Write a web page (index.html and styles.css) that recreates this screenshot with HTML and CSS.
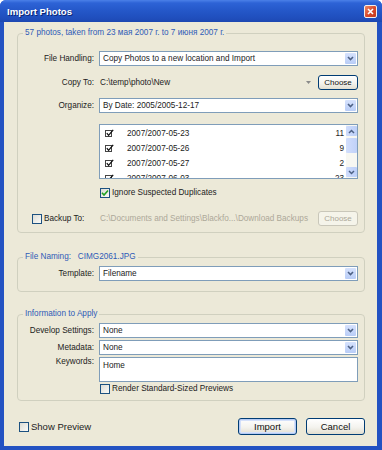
FILE: index.html
```html
<!DOCTYPE html>
<html>
<head>
	<meta charset="UTF-8">
	<title>Import Photos</title>
	<link rel="stylesheet" href="styles.css">
</head>
<body>
<div class="window">
	<div class="titlebar">
		<span class="title">Import Photos</span>
		<span class="close"><svg width="7" height="7" viewBox="0 0 7 7"><path d="M1 1l5 5M6 1l-5 5" stroke="#fff" stroke-width="1.6"/></svg></span>
	</div>

	<div class="client">
		<fieldset class="group g1">
			<legend>57 photos, taken from 23 мая 2007 г. to 7 июня 2007 г.</legend>

			<div class="row r-handling">
				<span class="lbl">File Handling:</span>
				<div class="combo"><span class="txt">Copy Photos to a new location and Import</span><span class="drop"><svg width="7" height="5" viewBox="0 0 7 5"><path d="M1 1l2.5 2.5L6 1" fill="none" stroke="#4d6185" stroke-width="1.6"/></svg></span></div>
			</div>

			<div class="row r-copy">
				<span class="lbl">Copy To:</span>
				<div class="path"><span class="txt">C:\temp\photo\New</span><svg width="5" height="3" viewBox="0 0 5 3"><path d="M0 0h5L2.5 3z" fill="#8a8a8a"/></svg></div>
				<button class="btn small">Choose</button>
			</div>

			<div class="row r-organize">
				<span class="lbl">Organize:</span>
				<div class="combo"><span class="txt">By Date: 2005/2005-12-17</span><span class="drop"><svg width="7" height="5" viewBox="0 0 7 5"><path d="M1 1l2.5 2.5L6 1" fill="none" stroke="#4d6185" stroke-width="1.6"/></svg></span></div>
			</div>

			<div class="list">
				<div class="items">
					<div class="item"><svg class="cb" width="9" height="9" viewBox="0 0 9 9"><rect x="0.5" y="1.5" width="6" height="6" fill="none" stroke="#444"/><path d="M1.8 4.2l1.8 2.1L8.2 0.8" fill="none" stroke="#111" stroke-width="1.3"/></svg><span class="date">2007/2007-05-23</span><span class="count">11</span></div>
					<div class="item"><svg class="cb" width="9" height="9" viewBox="0 0 9 9"><rect x="0.5" y="1.5" width="6" height="6" fill="none" stroke="#444"/><path d="M1.8 4.2l1.8 2.1L8.2 0.8" fill="none" stroke="#111" stroke-width="1.3"/></svg><span class="date">2007/2007-05-26</span><span class="count">9</span></div>
					<div class="item"><svg class="cb" width="9" height="9" viewBox="0 0 9 9"><rect x="0.5" y="1.5" width="6" height="6" fill="none" stroke="#444"/><path d="M1.8 4.2l1.8 2.1L8.2 0.8" fill="none" stroke="#111" stroke-width="1.3"/></svg><span class="date">2007/2007-05-27</span><span class="count">2</span></div>
					<div class="item"><svg class="cb" width="9" height="9" viewBox="0 0 9 9"><rect x="0.5" y="1.5" width="6" height="6" fill="none" stroke="#444"/><path d="M1.8 4.2l1.8 2.1L8.2 0.8" fill="none" stroke="#111" stroke-width="1.3"/></svg><span class="date">2007/2007-06-03</span><span class="count">23</span></div>
				</div>
				<div class="scroll">
					<span class="sbtn"><svg width="7" height="5" viewBox="0 0 7 5"><path d="M1 4l2.5-2.5L6 4" fill="none" stroke="#4d6185" stroke-width="1.5"/></svg></span>
					<span class="thumb"></span>
					<span class="track"></span>
					<span class="sbtn"><svg width="7" height="5" viewBox="0 0 7 5"><path d="M1 1l2.5 2.5L6 1" fill="none" stroke="#4d6185" stroke-width="1.5"/></svg></span>
				</div>
			</div>

			<div class="row r-ignore">
				<span class="xpcb"><svg width="8" height="8" viewBox="0 0 8 8"><path d="M1 3.8l2 2.2L7 1.5" fill="none" stroke="#21a121" stroke-width="1.6"/></svg></span>
				<span class="cbtext">Ignore Suspected Duplicates</span>
			</div>

			<div class="row r-backup">
				<div class="bk">
					<span class="xpcb"></span>
					<span class="cbtext">Backup To:</span>
				</div>
				<div class="path dim">C:\Documents and Settings\Blackfo...\Download Backups</div>
				<button class="btn small off">Choose</button>
			</div>
		</fieldset>

		<fieldset class="group g2">
			<legend>File Naming:&nbsp;&nbsp; CIMG2061.JPG</legend>
			<div class="row r-template">
				<span class="lbl">Template:</span>
				<div class="combo"><span class="txt">Filename</span><span class="drop"><svg width="7" height="5" viewBox="0 0 7 5"><path d="M1 1l2.5 2.5L6 1" fill="none" stroke="#4d6185" stroke-width="1.6"/></svg></span></div>
			</div>
		</fieldset>

		<fieldset class="group g3">
			<legend>Information to Apply</legend>
			<div class="row r-develop">
				<span class="lbl">Develop Settings:</span>
				<div class="combo"><span class="txt">None</span><span class="drop"><svg width="7" height="5" viewBox="0 0 7 5"><path d="M1 1l2.5 2.5L6 1" fill="none" stroke="#4d6185" stroke-width="1.6"/></svg></span></div>
			</div>
			<div class="row r-meta">
				<span class="lbl">Metadata:</span>
				<div class="combo"><span class="txt">None</span><span class="drop"><svg width="7" height="5" viewBox="0 0 7 5"><path d="M1 1l2.5 2.5L6 1" fill="none" stroke="#4d6185" stroke-width="1.6"/></svg></span></div>
			</div>
			<div class="row r-keywords">
				<span class="lbl">Keywords:</span>
				<div class="textbox">Home</div>
			</div>
			<div class="row r-render">
				<span class="xpcb"></span>
				<span class="cbtext">Render Standard-Sized Previews</span>
			</div>
		</fieldset>

		<div class="footer">
			<span class="xpcb"></span>
			<span class="cbtext">Show Preview</span>
			<button class="btn big default">Import</button>
			<button class="btn big">Cancel</button>
		</div>
	</div>
</div>
</body>
</html>
```

FILE: styles.css
```css
body {
	margin: 0;
	background: #fff;
	font-family: "Liberation Sans", Arial, sans-serif;
	font-size: 8.2px;
	color: #222;
}

/* window frame */
.window {
	width: 382px;
	height: 450px;
	display: flex;
	flex-direction: column;
	background: #2352c2;
	border-radius: 6px 6px 0 0;
	overflow: hidden;
}

.titlebar {
	height: 22px;
	flex: none;
	display: flex;
	align-items: center;
	background: linear-gradient(#4b80e8 0, #2d63d6 3px, #2457c8 11px, #1f4dbb 19px, #1c47b0 22px);
}

.title {
	margin-left: 7px;
	color: #fff;
	font-weight: bold;
	font-size: 9.6px;
	text-shadow: 1px 1px 0 #0b2473;
}

.close {
	margin-left: auto;
	margin-right: 5px;
	width: 13px;
	height: 13px;
	box-sizing: border-box;
	border: 1px solid #f3f0ee;
	border-radius: 2px;
	background: linear-gradient(135deg, #ec8a66, #d9482a 55%, #c13a1d);
	display: flex;
	align-items: center;
	justify-content: center;
}

.client {
	flex: 1;
	margin: 0 5px 4px 4px;
	padding-top: 6px;
	background: #ece9d8;
}

/* group boxes */
.group {
	margin: 0 12px 0 13px;
	padding: 0 6px 0 0;
	border: 1px solid #d0d0bf;
	border-radius: 4px;
	min-width: 0;
}

.group legend {
	margin-left: 5px;
	padding: 0 2px;
	line-height: 10px;
	color: #2f5bb7;
}

.g1 { padding-bottom: 6px; }
.g2 { margin-top: 19px; padding-bottom: 10px; }
.g3 { margin-top: 17px; padding-bottom: 6px; }

.row {
	display: flex;
	align-items: center;
}

.lbl {
	width: 76px;
	margin-right: 5px;
	flex: none;
	text-align: right;
}

.r-handling { margin-top: 13px; }
.r-copy { margin-top: 9px; }
.r-organize { margin-top: 8px; }
.r-ignore { margin-top: 8px; height: 11px; padding-left: 82px; }
.r-backup { margin-top: 13px; }
.r-template { margin-top: 4px; }
.r-develop { margin-top: 4px; }
.r-meta { margin-top: 2px; }
.r-keywords { margin-top: 2px; align-items: flex-start; }
.r-render { margin-top: 1px; height: 11px; padding-left: 82px; }

/* combo boxes */
.combo {
	flex: 1;
	height: 15px;
	box-sizing: border-box;
	border: 1px solid #7f9db9;
	background: #fff;
	display: flex;
	align-items: center;
	padding-left: 3px;
}

.combo .txt { flex: 1; }

.drop {
	width: 11px;
	height: 11px;
	margin-right: 1px;
	border-radius: 1px;
	background: linear-gradient(#d6e2fd, #b9cdf7);
	display: flex;
	align-items: center;
	justify-content: center;
}

.path {
	flex: 1;
	display: flex;
	align-items: center;
	padding-left: 1px;
}

.path .txt { flex: 1; }

.path svg { margin-right: 7px; }

.dim { color: #aca899; }

.textbox {
	flex: 1;
	height: 25px;
	box-sizing: border-box;
	border: 1px solid #7f9db9;
	background: #fff;
	padding: 3px 3px;
}

/* photo list */
.list {
	margin: 11px 0 0 81px;
	height: 55px;
	box-sizing: border-box;
	border: 1px solid #7f9db9;
	background: #fff;
	display: flex;
	overflow: hidden;
}

.items {
	flex: 1;
	padding-top: 1px;
}

.item {
	display: flex;
	align-items: center;
	height: 15px;
}

.cb {
	flex: none;
	margin-left: 5px;
}

.date {
	margin-left: 13px;
	flex: 1;
}

.count {
	padding-right: 2px;
	text-align: right;
}

.scroll {
	width: 11px;
	display: flex;
	flex-direction: column;
	background: #f7f7f2;
}

.sbtn {
	height: 10px;
	margin: 1px 0;
	border-radius: 1px;
	background: linear-gradient(90deg, #cfdcfc, #bccff8);
	display: flex;
	align-items: center;
	justify-content: center;
}

.thumb {
	height: 15px;
	margin-top: 1px;
	border-radius: 1px;
	background: linear-gradient(90deg, #d2defc, #c0d1f9);
}

.track { flex: 1; }

/* xp checkboxes */
.xpcb {
	width: 10px;
	height: 10px;
	box-sizing: border-box;
	flex: none;
	border: 1px solid #1c5180;
	background: linear-gradient(135deg, #dcdcd5, #fbfbf8);
	display: flex;
	align-items: center;
	justify-content: center;
}

.cbtext { margin-left: 2px; }

.bk {
	width: 81px;
	flex: none;
	display: flex;
	align-items: center;
	padding-left: 14px;
	box-sizing: border-box;
}

/* buttons */
.btn {
	font-family: "Liberation Sans", Arial, sans-serif;
	color: #111;
	border: 1px solid #003c74;
	border-radius: 3px;
	background: linear-gradient(#ffffff, #f4f3ee 55%, #e2ded0);
	padding: 0;
	box-sizing: border-box;
}

.small {
	width: 40px;
	height: 15px;
	font-size: 8px;
}

.off {
	color: #aca899;
	border-color: #c9c7ba;
	background: #f5f4ea;
}

.footer {
	margin: 17px 12px 0 15px;
	height: 17px;
	display: flex;
	align-items: center;
	font-size: 9.5px;
}

.footer .cbtext { margin-left: 2px; }

.big {
	width: 59px;
	height: 17px;
	font-size: 9.5px;
}

.default {
	margin-left: auto;
	margin-right: 9px;
	box-shadow: inset 0 0 0 1px #b6cbf4, inset 0 0 0 2px #d5e1fa;
}
```
